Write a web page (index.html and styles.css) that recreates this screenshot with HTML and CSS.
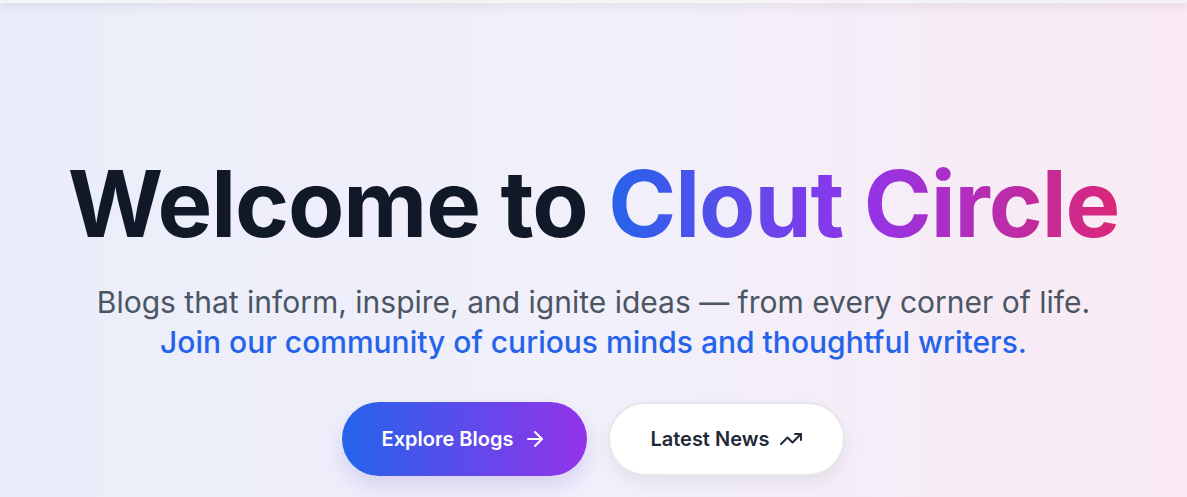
FILE: index.html
```html
<!DOCTYPE html>
<html lang="en">
<head>
<meta charset="utf-8">
<title>Clout Circle</title>
<link rel="stylesheet" href="styles.css">
</head>
<body>
<div class="topbar"></div>
<section class="hero">
  <h1 class="title">Welcome to <span class="brand">Clout Circle</span></h1>
  <p class="lead">Blogs that inform, inspire, and ignite ideas — from every corner of life.<br><span class="lead-accent">Join our community of curious minds and thoughtful writers.</span></p>
  <div class="actions">
    <a class="btn btn-primary" href="#">Explore Blogs
      <svg class="icon" viewBox="0 0 24 24" width="24" height="24" fill="none" stroke="currentColor" stroke-width="2" stroke-linecap="round" stroke-linejoin="round"><path d="M5 12h14"/><path d="m12 5 7 7-7 7"/></svg>
    </a>
    <a class="btn btn-secondary" href="#">Latest News
      <svg class="icon" viewBox="0 0 24 24" width="24" height="24" fill="none" stroke="currentColor" stroke-width="2" stroke-linecap="round" stroke-linejoin="round"><path d="M22 7 13.5 15.5 8.5 10.5 2 17"/><path d="M16 7h6v6"/></svg>
    </a>
  </div>
</section>
</body>
</html>
```
FILE: styles.css
```css
* { box-sizing: border-box; }
html, body { margin: 0; padding: 0; }
body {
  font-family: Inter, "Noto Sans", sans-serif;
  background: linear-gradient(90deg, #eaedf9 0%, #f1f0fb 50%, #f9eaf3 100%);
  height: 497px;
  overflow: hidden;
  position: relative;
}
.topbar {
  height: 3px;
  background: #f4f4f6;
  box-shadow: 0 2px 10px rgba(0,0,0,0.18);
  position: relative;
  z-index: 2;
}
.hero {
  display: flex;
  flex-direction: column;
  align-items: center;
  text-align: center;
  padding-top: 150px;
}
.title {
  margin: 0;
  font-size: 92px;
  font-weight: 700;
  line-height: 1.1;
  letter-spacing: -0.012em;
  color: #111827;
}
.brand {
  background: linear-gradient(90deg, #2563eb 0%, #9333ea 50%, #db2777 100%);
  -webkit-background-clip: text;
  background-clip: text;
  color: transparent;
}
.lead {
  margin: 28px 0 0;
  font-size: 30px;
  line-height: 40px;
  color: #4b5563;
}
.lead-accent { color: #2563eb; font-weight: 500; }
.actions {
  display: flex;
  gap: 21px;
  margin-top: 40px;
}
.btn {
  display: inline-flex;
  align-items: center;
  gap: 10px;
  height: 74px;
  padding: 0 40px;
  border-radius: 999px;
  font-size: 20px;
  font-weight: 600;
  text-decoration: none;
}
.btn-primary {
  color: #fff;
  background: linear-gradient(90deg, #2563eb, #9333ea);
  box-shadow: 0 10px 20px rgba(99, 72, 200, 0.18);
}
.btn-secondary {
  color: #1f2937;
  background: #fff;
  border: 2px solid #e5e7eb;
  box-shadow: 0 8px 18px rgba(0,0,0,0.06);
}
.icon { flex: none; }
```
